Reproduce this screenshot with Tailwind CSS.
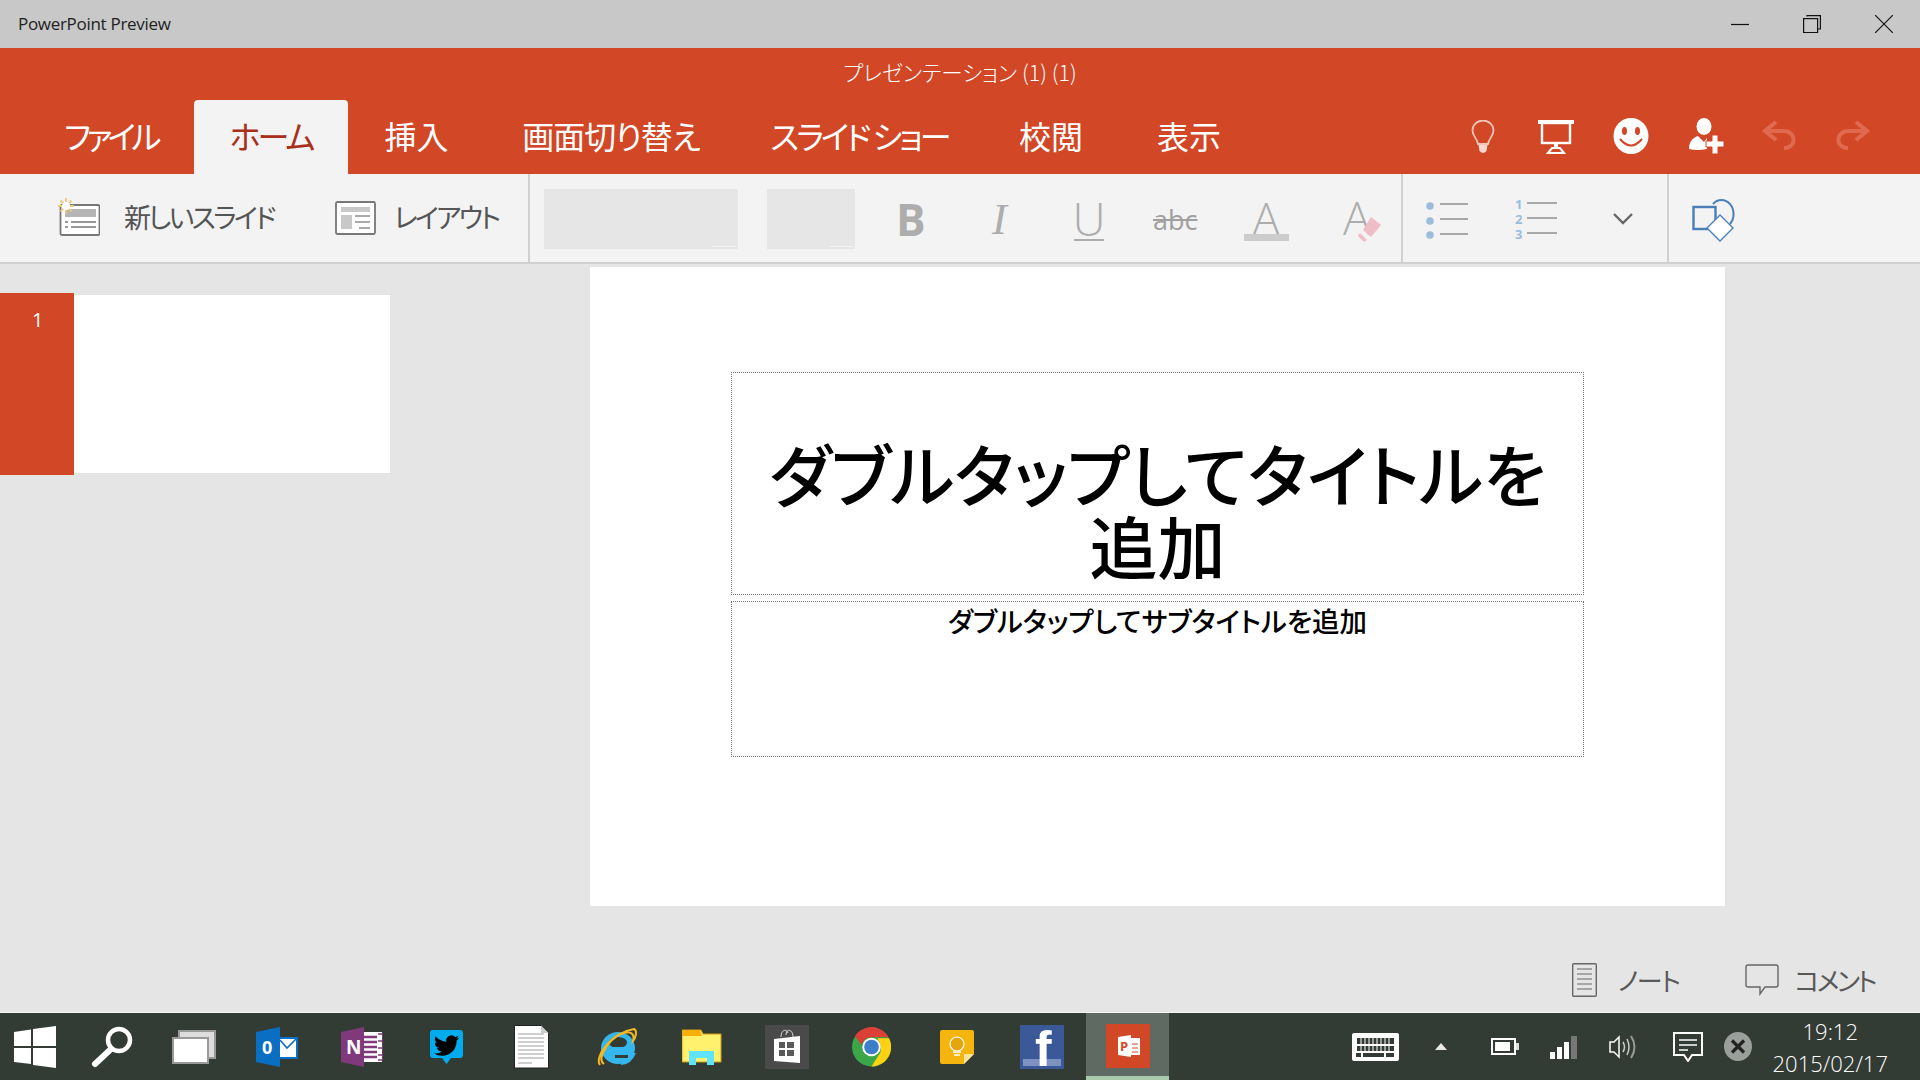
<!DOCTYPE html>
<html lang="ja">
<head>
<meta charset="utf-8">
<title>PowerPoint Preview</title>
<script src="https://cdn.jsdelivr.net/npm/@tailwindcss/browser@4"></script>
</head>
<body class="m-0 overflow-hidden">
<div class="w-[1920px] h-[1080px] flex flex-col bg-[#e5e5e5] font-['Noto_Sans_CJK_JP',sans-serif] [font-feature-settings:'palt']">

  <!-- title bar -->
  <div class="h-[48px] bg-[#c8c8c8] flex items-center shrink-0">
    <span class="ml-[18px] text-[17px] tracking-[-0.3px] text-[#222] font-['Open_Sans',sans-serif]">PowerPoint Preview</span>
    <div class="ml-auto flex items-center">
      <svg class="w-[18px] h-[18px] mr-[54px]" viewBox="0 0 18 18"><path d="M0 9.5H18" stroke="#111" stroke-width="1.2"/></svg>
      <svg class="w-[18px] h-[18px] mr-[54px]" viewBox="0 0 18 18" fill="none" stroke="#111" stroke-width="1.2"><path d="M4 1.5V0.6H17.4V14H14.5"/><rect x="0.6" y="3.6" width="14" height="14"/></svg>
      <svg class="w-[18px] h-[18px] mr-[27px]" viewBox="0 0 18 18" stroke="#111" stroke-width="1.2"><path d="M0 0L18 18M18 0L0 18"/></svg>
    </div>
  </div>

  <!-- red header -->
  <div class="h-[126px] bg-[#d24726] flex flex-col shrink-0">
    <div class="h-[52px] pt-[5px] text-center text-white text-[21.5px] leading-[38px] font-light">プレゼンテーション (1) (1)</div>
    <div class="flex-1 flex items-stretch pl-[27px]">
      <div class="w-[167px] pt-[10px] text-center text-white text-[32px] leading-[50px] tracking-[-4.5px]">ファイル</div>
      <div class="w-[154px] pt-[10px] text-center bg-[#f3f3f3] text-[#a8301a] rounded-t-[4px] text-[32px] leading-[50px] tracking-[-3px]">ホーム</div>
      <div class="w-[137px] pt-[10px] text-center text-white text-[32px] leading-[50px]">挿入</div>
      <div class="w-[252px] pt-[10px] text-center text-white text-[32px] leading-[50px] tracking-[-1px]">画面切り替え</div>
      <div class="w-[245px] pt-[10px] text-center text-white text-[32px] leading-[50px] tracking-[-3px]">スライド ショー</div>
      <div class="w-[138px] pt-[10px] text-center text-white text-[32px] leading-[50px]">校閲</div>
      <div class="w-[138px] pt-[10px] text-center text-white text-[32px] leading-[50px]">表示</div>
      <div class="ml-auto flex items-start pt-[18px] pr-[50px]">
        <svg class="w-[24px] h-[34px] mt-[2px] mr-[43px]" viewBox="0 0 24 34" fill="none"><path d="M7 24C6 18 1.5 16 1.5 10.500A10.500 10 0 0 1 22.500 10.500C22.500 16 18 18 17 24Z" stroke="#f3c5b8" stroke-width="1.800"/><path d="M7.500 25H16.500L15.500 31Q12 35 8.500 31Z" fill="#f6d6cd"/></svg>
        <svg class="w-[36px] h-[34px] mt-[2px] mr-[39px]" viewBox="0 0 36 34" fill="none" stroke="#fff"><path d="M0 2H36" stroke-width="4"/><rect x="4" y="3" width="28" height="20" stroke-width="2.400"/><path d="M18 23V27" stroke-width="4"/><path d="M10 33L14 28H22L26 33Z" stroke-width="2.200"/></svg>
        <svg class="w-[36px] h-[36px] mr-[40px]" viewBox="0 0 36 36"><ellipse cx="18" cy="18" rx="17.500" ry="18" fill="#fff"/><ellipse cx="11.500" cy="13" rx="2.500" ry="4" fill="#d24726"/><ellipse cx="24.500" cy="13" rx="2.500" ry="4" fill="#d24726"/><path d="M7 21Q18 34 29 21" fill="none" stroke="#d24726" stroke-width="2"/></svg>
        <svg class="w-[35px] h-[36px] mr-[38px]" viewBox="0 0 35 36" fill="#fff"><ellipse cx="15" cy="8.500" rx="7.500" ry="8.500"/><path d="M0 31C0 24 3 20 9 18L15 24L18 20V31Q8 33 0 31Z"/><path d="M23 17H29V23H35V29H29V36H23V29H17V23H23Z" stroke="#d24726" stroke-width="1"/></svg>
        <svg class="w-[34px] h-[30px] mr-[40px] mt-[2px]" viewBox="0 0 34 30" fill="none" stroke="#e06a4f" stroke-width="4"><path d="M14 2L3 11L14 20"/><path d="M4 11H21C35 11 35 28 22 28"/></svg>
        <svg class="w-[34px] h-[30px] mt-[2px]" viewBox="0 0 34 30" fill="none" stroke="#e06a4f" stroke-width="4"><path d="M20 2L31 11L20 20"/><path d="M30 11H13C-1 11 -1 28 12 28"/></svg>
      </div>
    </div>
  </div>

  <!-- ribbon -->
  <div class="h-[90px] bg-[#f3f3f3] border-b-2 border-[#d0d0d0] flex shrink-0">
    <div class="w-[528px] flex items-center shrink-0">
      <svg class="ml-[58px] w-[42px] h-[38px] -mt-[2px]" viewBox="0 0 42 38"><rect x="2.500" y="7" width="39" height="30" rx="1.500" fill="#fff" stroke="#777" stroke-width="1.800"/><rect x="7" y="11" width="31" height="8" fill="#b5b5b5"/><path d="M13 24H38M13 29H38" stroke="#777" stroke-width="1.600"/><path d="M7 24H10M7 29H10" stroke="#777" stroke-width="1.600"/><g stroke="#efc77e" stroke-width="1.800"><path d="M8 0V16M0 8H16M2.500 2.500L13.500 13.500M13.500 2.500L2.500 13.500"/></g><circle cx="8" cy="8" r="4" fill="#fff"/></svg>
      <span class="ml-[24px] w-[152px] text-[27px] leading-[36px] tracking-[-2.6px] text-[#555] whitespace-nowrap -mt-[2px]">新しいスライド</span>
      <svg class="ml-[59px] w-[41px] h-[34px]" viewBox="0 0 41 34"><rect x="1" y="1" width="39" height="32" rx="1.500" fill="#fff" stroke="#777" stroke-width="1.800"/><rect x="6" y="6" width="29" height="5" fill="#c8c8c8"/><rect x="6" y="14" width="11" height="14" fill="#c8c8c8"/><path d="M20 15H35M20 21H35M24 27H35" stroke="#aaa" stroke-width="2"/></svg>
      <span class="ml-[18px] text-[27px] leading-[36px] tracking-[-2.7px] text-[#555] whitespace-nowrap -mt-[2px]">レイアウト</span>
    </div>
    <div class="w-[2px] bg-[#d0d0d0] shrink-0"></div>
    <div class="w-[871px] shrink-0 flex items-start pt-[15px] relative">
      <div class="ml-[14px] w-[194px] h-[60px] bg-[#e6e6e6] relative"><div class="absolute right-[2px] bottom-[2px] w-[24px] h-[1px] bg-[#f3f3f3]"></div></div>
      <div class="ml-[29px] w-[88px] h-[60px] bg-[#e6e6e6] relative"><div class="absolute right-[2px] bottom-[2px] w-[24px] h-[1px] bg-[#f3f3f3]"></div></div>
      <div class="ml-[41px] w-[46px] mt-[8px] text-[44px] leading-[44px] font-bold text-[#adadad] font-['Open_Sans',sans-serif]">B</div>
      <div class="ml-[50px] w-[42px] mt-[9px] text-[44px] leading-[44px] italic text-[#adadad] font-['Liberation_Serif',serif]">I</div>
      <div class="ml-[30px] w-[50px] mt-[9px] flex flex-col items-center"><span class="text-[46px] leading-[40px] text-[#adadad] font-light font-['Open_Sans',sans-serif]">U</span><span class="w-[30px] h-[2px] bg-[#adadad] mt-[1px]"></span></div>
      <div class="ml-[39px] w-[60px] mt-[18px] text-[27px] leading-[26px] text-[#a0a0a0] line-through font-['Open_Sans',sans-serif]">abc</div>
      <div class="ml-[30px] w-[46px] mt-[13px] flex flex-col items-center"><span class="text-[46px] leading-[33px] text-[#adadad] font-light font-['Open_Sans',sans-serif]">A</span><span class="w-[45px] h-[7px] bg-[#cccccc] -mt-[1px]"></span></div>
      <div class="ml-[54px] w-[40px] h-[40px] mt-[13px] relative">
        <span class="absolute left-0 top-[-7px] text-[46px] leading-[44px] text-[#adadad] font-light font-['Open_Sans',sans-serif]">A</span>
        <svg class="absolute left-[14px] top-[14px] w-[26px] h-[26px]" viewBox="0 0 26 26"><path d="M14 1L24 9L14 21L6 14Z" fill="#efbcc8"/><path d="M3 17L10 24L7 26L1 20Z" fill="#efbcc8"/></svg>
      </div>
    </div>
    <div class="w-[2px] bg-[#d0d0d0] shrink-0 -ml-[0px]"></div>
    <div class="w-[264px] shrink-0 flex items-start">
      <svg class="ml-[23px] mt-[28px] w-[44px] h-[40px]" viewBox="0 0 44 40"><g fill="#9bbcdc"><circle cx="4" cy="4" r="3.800"/><circle cx="4" cy="19" r="3.800"/><circle cx="4" cy="33" r="3.800"/></g><path d="M14 2H42M14 17H42M14 32H42" stroke="#a8a8a8" stroke-width="2"/></svg>
      <svg class="ml-[45px] mt-[24px] w-[44px] h-[42px] overflow-visible" viewBox="0 0 44 42"><g fill="#9bbcdc" font-size="13" font-weight="700" font-family="Open Sans"><text x="0" y="11">1</text><text x="0" y="26">2</text><text x="0" y="41">3</text></g><path d="M12 5H42M12 20H42M12 35H42" stroke="#a8a8a8" stroke-width="2"/></svg>
      <svg class="ml-[53px] mt-[38px] w-[22px] h-[14px]" viewBox="0 0 22 14" fill="none" stroke="#666" stroke-width="2.400"><path d="M2 2L11 11L20 2"/></svg>
    </div>
    <div class="w-[2px] bg-[#d0d0d0] shrink-0"></div>
    <div class="flex-1">
      <svg class="ml-[23px] mt-[22px] w-[46px] h-[46px]" viewBox="0 0 46 46" fill="none" stroke="#4a7fb8"><path d="M21 8A12 14 0 1 1 38 28" stroke-width="2"/><rect x="1.500" y="11" width="22" height="22" stroke-width="2.400" fill="#f3f3f3"/><path d="M28 19L41 32L28 45L15 32Z" stroke-width="1.400" fill="#fff"/></svg>
    </div>
  </div>

  <!-- main -->
  <div class="flex-1 flex flex-col">
    <div class="flex h-[686px]">
      <div class="w-[590px] shrink-0 pt-[29px]">
        <div class="flex h-[182px]">
          <div class="w-[74px] bg-[#d24726] text-white text-[20px] leading-[26px] pt-[14px] pl-[32px] font-['Open_Sans',sans-serif]">1</div>
          <div class="w-[316px] h-[178px] mt-[2px] bg-white"></div>
        </div>
      </div>
      <div class="pt-[3px]">
        <div class="w-[1135px] h-[639px] bg-white pt-[105px] pl-[141px] flex flex-col">
          <div class="w-[853px] h-[223px] border border-dotted border-[#777] flex flex-col justify-end pb-[13px] text-center text-black text-[68px] leading-[72px] font-medium">ダブルタップしてタイトルを<br>追加</div>
          <div class="w-[853px] h-[156px] mt-[6px] border border-dotted border-[#777] text-center text-black text-[27.5px] leading-[36px] pt-0 font-medium">ダブルタップしてサブタイトルを追加</div>
        </div>
      </div>
    </div>
    <div class="flex-1 flex items-center justify-end pb-[2px]">
      <svg class="w-[25px] h-[34px]" viewBox="0 0 25 34" fill="none" stroke="#666"><rect x="0.700" y="0.700" width="23.600" height="32.600" rx="1" stroke-width="1.400"/><path d="M5 6H20M5 11H20M5 16H20M5 21H20M5 26H20" stroke-width="1"/></svg>
      <span class="ml-[21px] text-[26px] leading-[36px] tracking-[-1.5px] text-[#595959]">ノート</span>
      <svg class="ml-[66px] w-[34px] h-[32px]" viewBox="0 0 34 32" fill="none" stroke="#666" stroke-width="1.400"><path d="M3 1H31Q33 1 33 3V21Q33 23 31 23H20L15 30V23H3Q1 23 1 21V3Q1 1 3 1Z"/></svg>
      <span class="ml-[15px] mr-[45px] text-[26px] leading-[36px] tracking-[-2.5px] text-[#595959]">コメント</span>
    </div>
  </div>

  <!-- taskbar -->
  <div class="h-[68px] border-t border-[#f4f4f4] bg-[#333b35] flex items-stretch shrink-0">
    <div class="w-[70px] flex items-center justify-center">
      <svg class="w-[42px] h-[42px]" viewBox="0 0 42 42" fill="#fff"><path d="M0 6L17 3.500V20H0ZM19 3L42 0V20H19ZM0 22H17V38L0 36ZM19 22H42V42L19 39Z"/></svg>
    </div>
    <div class="w-[84px] flex items-center justify-center">
      <svg class="w-[42px] h-[42px]" viewBox="0 0 42 42" fill="none" stroke="#fff"><circle cx="28" cy="14" r="11" stroke-width="4.500"/><path d="M20 23L4 38" stroke-width="6" stroke-linecap="round"/></svg>
    </div>
    <div class="w-[80px] flex items-center justify-center">
      <svg class="w-[44px] h-[34px]" viewBox="0 0 44 34"><rect x="7" y="1" width="36" height="27" fill="#ddd" stroke="#999" stroke-width="2"/><rect x="1" y="8" width="35" height="25" fill="#fff" stroke="#999" stroke-width="2"/></svg>
    </div>
    <div class="w-[85px] flex items-center justify-center">
      <svg class="w-[42px] h-[40px]" viewBox="0 0 42 40"><rect x="22" y="10" width="20" height="22" fill="#0a6fc2"/><rect x="24" y="12" width="16" height="18" fill="#fff"/><path d="M24 13L31 21L40 12" fill="none" stroke="#0a6fc2" stroke-width="1.600"/><path d="M0 5L24 0V40L0 35Z" fill="#0a6fc2"/><text x="6" y="27" font-size="18" font-weight="700" fill="#fff" font-family="Open Sans">0</text></svg>
    </div>
    <div class="w-[85px] flex items-center justify-center">
      <svg class="w-[42px] h-[40px]" viewBox="0 0 42 40"><rect x="20" y="5" width="21" height="30" fill="#fff"/><path d="M22 10H36M22 15H36M22 20H36M22 25H36M22 30H36" stroke="#80397b" stroke-width="2.500"/><path d="M37 7H42V33H37M37 14H42M37 21H42M37 28H42" fill="none" stroke="#80397b" stroke-width="1.500"/><path d="M0 5L23 0V40L0 35Z" fill="#80397b"/><text x="5" y="27" font-size="19" font-weight="700" fill="#fff" font-family="Open Sans">N</text></svg>
    </div>
    <div class="w-[85px] flex items-center justify-center">
      <svg class="w-[33px] h-[34px]" viewBox="0 0 33 34"><path d="M3 0H30Q33 0 33 3V25Q33 28 30 28H21L16.500 34L12 28H3Q0 28 0 25V3Q0 0 3 0Z" fill="#00aced"/><g transform="translate(4 3) scale(1.050)"><path fill="#000" d="M23.953 4.57a10 10 0 01-2.825.775 4.958 4.958 0 002.163-2.723c-.951.555-2.005.959-3.127 1.184a4.92 4.92 0 00-8.384 4.482C7.69 8.095 4.067 6.13 1.64 3.162a4.822 4.822 0 00-.666 2.475c0 1.71.87 3.213 2.188 4.096a4.904 4.904 0 01-2.228-.616v.06a4.923 4.923 0 003.946 4.827 4.996 4.996 0 01-2.212.085 4.936 4.936 0 004.604 3.417 9.867 9.867 0 01-6.102 2.105c-.39 0-.779-.023-1.17-.067a13.995 13.995 0 007.557 2.209c9.053 0 13.998-7.496 13.998-13.985 0-.21 0-.42-.015-.63A9.935 9.935 0 0024 4.59z"/></g></svg>
    </div>
    <div class="w-[85px] flex items-center justify-center">
      <svg class="w-[35px] h-[44px]" viewBox="0 0 35 44"><path d="M0.500 0.500H27L34.500 8V43H0.500Z" fill="#fff" stroke="#222" stroke-width="1"/><path d="M27 0.500V8H34.500Z" fill="#ccc"/><path d="M4 9H30M4 13H30M4 17H30M4 21H30M4 25H30M4 29H30M4 33H30M4 38H18" stroke="#cfcfcf" stroke-width="2"/></svg>
    </div>
    <div class="w-[85px] flex items-center justify-center">
      <svg class="w-[40px] h-[40px] overflow-visible" viewBox="0 0 40 40"><ellipse cx="21" cy="21" rx="17" ry="16" fill="#35b6ec"/><ellipse cx="21" cy="15.500" rx="9" ry="5.500" fill="#333b35"/><path d="M12 23H38V20H4V23Z" fill="#35b6ec"/><path d="M25 26H39Q34 38 24 38Z" fill="#35b6ec"/><path d="M18 28H31V31H18Z" fill="#333b35"/><path d="M3 38C-3 30 14 6 37 2C41 4 38 12 36 14C38 7 34 3 24 7C12 12 -1 32 7 37" fill="none" stroke="#f2b824" stroke-width="2"/></svg>
    </div>
    <div class="w-[85px] flex items-center justify-center">
      <svg class="w-[40px] h-[36px]" viewBox="0 0 40 36"><path d="M0 1H19L21 5H39V33H0Z" fill="#fff06e" stroke="#d29a10" stroke-width="1"/><path d="M0 1H18L20 7H0Z" fill="#f7ae07"/><path d="M7 36V22H32V36H25V29H14V36Z" fill="#5fe3ff"/></svg>
    </div>
    <div class="w-[85px] flex items-center justify-center">
      <svg class="w-[44px] h-[44px]" viewBox="0 0 44 44"><rect width="44" height="44" fill="#4a4a4a"/><path d="M16 12C16 4 22 4 23 8M21 10C21 3 28 4 28 12" fill="none" stroke="#ddd" stroke-width="1"/><path d="M9 14L35 11V38L9 36Z" fill="#fff"/><path d="M14 17H20V23H14ZM22 17H29V23H22ZM14 25H20V31H14ZM22 25H29V31H22Z" fill="#5a5a5a"/></svg>
    </div>
    <div class="w-[85px] flex items-center justify-center">
      <svg class="w-[39px] h-[40px]" viewBox="0 0 40 40"><circle cx="20" cy="20" r="20" fill="#3aa648"/><path d="M3 9A20 20 0 0 1 37.500 10L20 10Q12 10 10 18Z" fill="#db3f35"/><path d="M38 11A20 20 0 0 1 20 40L29 26Q31 18 26 11Z" fill="#fdd210"/><circle cx="20" cy="20" r="9.500" fill="#fff"/><circle cx="20" cy="20" r="7.500" fill="#3c7fc8"/></svg>
    </div>
    <div class="w-[85px] flex items-center justify-center">
      <svg class="w-[34px] h-[34px]" viewBox="0 0 34 34"><path d="M2 0H32Q34 0 34 2V24L24 34H2Q0 34 0 32V2Q0 0 2 0Z" fill="#f5b50e"/><path d="M34 24H24V34Z" fill="#fbe39a"/><circle cx="17" cy="14" r="7" fill="#e5a30c" stroke="#fff" stroke-width="1.200"/><path d="M13 22H21M14 25H20" stroke="#fff" stroke-width="1.500"/></svg>
    </div>
    <div class="w-[85px] flex items-center justify-center">
      <svg class="w-[44px] h-[44px]" viewBox="0 0 44 44"><rect width="44" height="44" fill="#3b5998"/><rect x="3" y="34" width="38" height="7" fill="#7d92c0"/><text x="15" y="41" font-size="50" font-weight="700" fill="#fff" font-family="Liberation Sans">f</text></svg>
    </div>
    <div class="ml-[2px] w-[83px] bg-[#5f6b62] border-b-4 border-[#a9c9ad] flex items-start pt-[11px] justify-center">
      <svg class="w-[44px] h-[44px]" viewBox="0 0 44 44"><rect width="44" height="44" fill="#d24726"/><rect x="23" y="14" width="11" height="17" fill="#fff"/><path d="M26 20H32M26 24H32M26 28H32" stroke="#d24726"/><path d="M12 13L25 11V33L12 31Z" fill="#fff"/><text x="14" y="27" font-size="13" font-weight="700" fill="#d24726" font-family="Open Sans">P</text></svg>
    </div>

    <div class="flex-1 flex items-center relative">
      <svg class="ml-[183px] w-[47px] h-[28px]" viewBox="0 0 47 28"><rect width="47" height="28" rx="2" fill="#fff"/><path d="M5 5H42V11H5ZM5 13H42V18H5ZM4 20H9V24H4ZM11 20H32V24H11ZM34 20H42V24H34Z" fill="#333b35"/><path d="M9 5V18M13 5V18M17 5V18M21 5V18M25 5V18M29 5V18M33 5V18M37 5V18" stroke="#fff" stroke-width="1"/></svg>
      <svg class="ml-[36px] w-[12px] h-[7px]" viewBox="0 0 12 7"><path d="M6 0L12 7H0Z" fill="#e8e8e8"/></svg>
      <svg class="ml-[44px] w-[28px] h-[17px]" viewBox="0 0 28 17"><rect x="1" y="1" width="23" height="15" fill="none" stroke="#fff" stroke-width="2"/><rect x="4" y="4" width="15" height="9" fill="#fff"/><rect x="25" y="5" width="3" height="7" fill="#ddd"/></svg>
      <svg class="ml-[31px] w-[29px] h-[24px]" viewBox="0 0 29 24"><g fill="#fff"><rect x="0" y="17" width="5" height="7"/><rect x="7" y="12" width="5" height="12"/><rect x="14" y="7" width="5" height="17"/></g><rect x="21" y="1" width="6" height="23" fill="#777"/></svg>
      <svg class="ml-[30px] w-[30px] h-[26px]" viewBox="0 0 30 26" fill="none" stroke="#fff" stroke-width="1.500"><path d="M10 3L5 8H1V18H5L10 23Z"/><path d="M14 8Q17 13 14 18M18 5Q22 13 18 21" stroke="#ccc"/><path d="M22 2Q29 13 22 24" stroke="#999" stroke-width="2"/></svg>
      <svg class="ml-[34px] w-[30px] h-[30px]" viewBox="0 0 30 30" fill="none" stroke="#fff" stroke-width="2"><path d="M1 1H29V23H19L15 29L11 23H1Z"/><path d="M6 8H24M6 13H24M6 18H15" stroke-width="1.600"/></svg>
      <svg class="ml-[21px] w-[28px] h-[29px]" viewBox="0 0 28 29"><ellipse cx="14" cy="14.500" rx="14" ry="14.500" fill="#9a9f9b"/><path d="M8 8.500L20 20.500M20 8.500L8 20.500" stroke="#222" stroke-width="3.200"/></svg>
      <div class="absolute right-[32px] top-[3px] text-white text-[22px] leading-[30px] text-center font-light font-['Open_Sans',sans-serif] flex flex-col gap-[2px]"><span>19:12</span><span>2015/02/17</span></div>
    </div>
  </div>
</div>
</body>
</html>
